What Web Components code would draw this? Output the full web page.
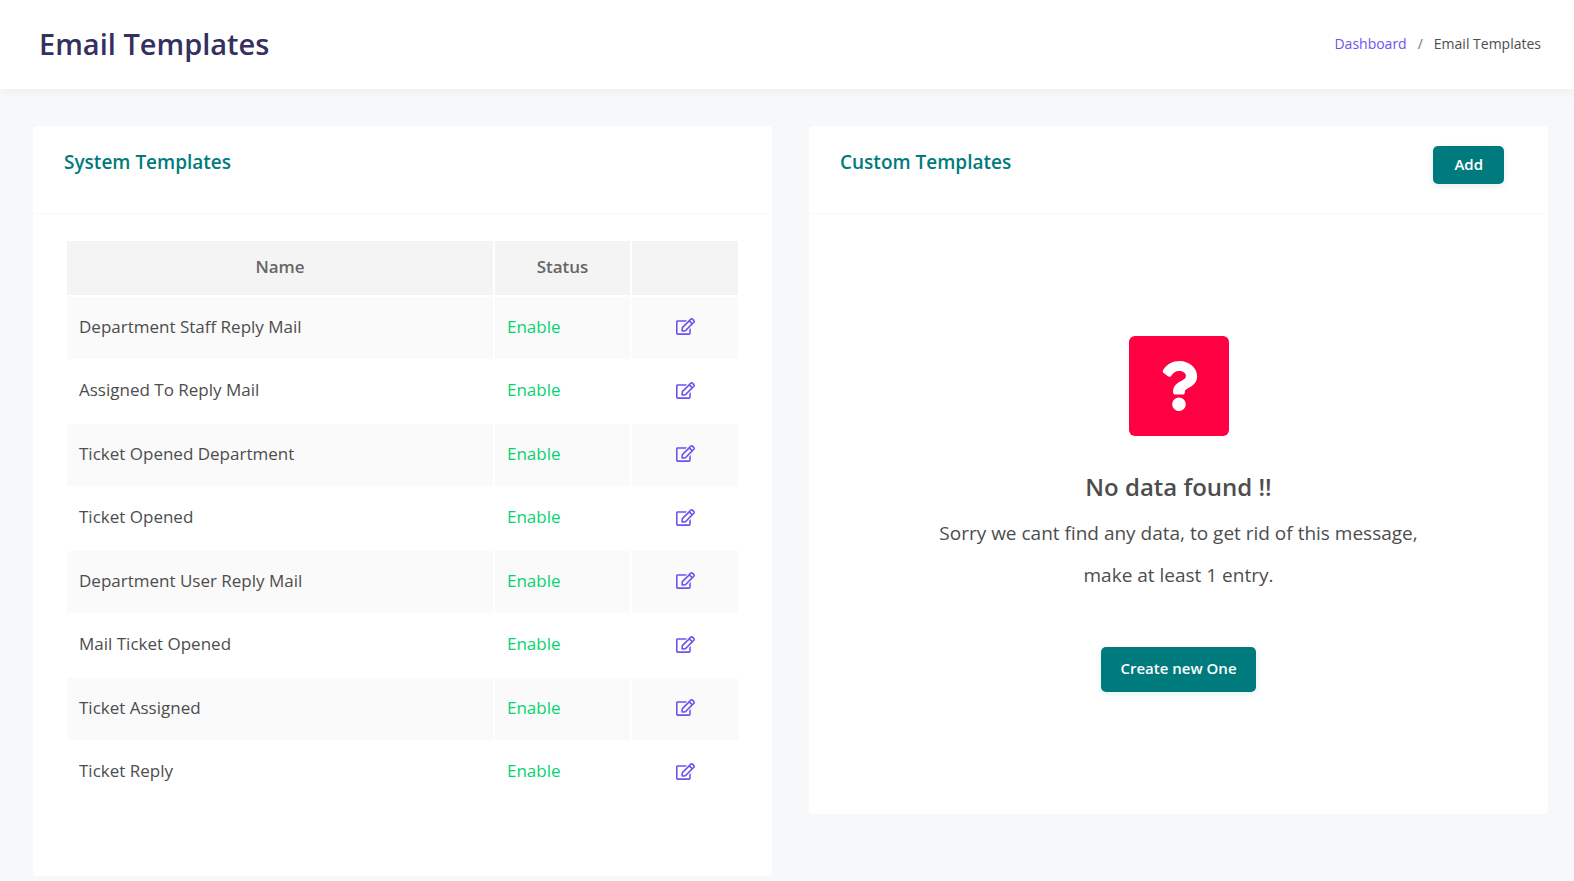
<!DOCTYPE html>
<html lang="en">
<head>
<meta charset="utf-8">
<title>Email Templates</title>
<style>
  body {
    margin: 0;
    min-height: 100vh;
    background: #f7f8fa;
    color: #4d4d4d;
    font-family: "Open Sans", sans-serif;
    font-size: 17px;
  }
  main {
    display: grid;
    grid-template-columns: 1fr 1fr;
    align-items: start;
    gap: 37px;
    padding: 37px 26px 4px 33px;
  }
</style>
</head>
<body>
<page-header heading="Email Templates">
  <bread-crumb current="Email Templates"></bread-crumb>
</page-header>
<main>
  <template-card heading="System Templates">
    <template-table></template-table>
  </template-card>
  <template-card heading="Custom Templates">
    <action-button slot="action">Add</action-button>
    <empty-state heading="No data found !!">
      Sorry we cant find any data, to get rid of this message, make at least 1 entry.
      <action-button slot="action" size="large">Create new One</action-button>
    </empty-state>
  </template-card>
</main>
<script>
  class BaseElement extends HTMLElement {
    connectedCallback() {
      if (this.shadowRoot) return;
      this.attachShadow({ mode: 'open' }).innerHTML = this.render();
    }
  }

  customElements.define('page-header', class extends BaseElement {
    render() {
      return `
        <style>
          :host { display: block; }
          header {
            display: flex;
            align-items: center;
            justify-content: space-between;
            box-sizing: border-box;
            min-height: 89px;
            padding: 0 33px 2px 39px;
            background: #fff;
            box-shadow: 0 4px 8px rgba(0, 0, 0, .03);
          }
          h1 { margin: 0; color: #34305f; font-size: 29px; font-weight: 600; line-height: 40px; }
        </style>
        <header><h1>${this.getAttribute('heading')}</h1><slot></slot></header>`;
    }
  });

  customElements.define('bread-crumb', class extends BaseElement {
    render() {
      return `
        <style>
          :host { display: block; font-size: 14px; line-height: 24px; }
          ol { display: flex; gap: 11px; margin: 0; padding: 0; list-style: none; }
          li { display: flex; gap: 11px; }
          li + li::before { content: "/"; color: #6c757d; }
          a { color: #6f52ed; text-decoration: none; }
        </style>
        <nav aria-label="Breadcrumb"><ol>
          <li><a href="#dashboard">Dashboard</a></li>
          <li aria-current="page">${this.getAttribute('current')}</li>
        </ol></nav>`;
    }
  });

  customElements.define('template-card', class extends BaseElement {
    render() {
      return `
        <style>
          :host { display: block; border-radius: 4px; background: #fff; }
          header {
            display: flex;
            align-items: flex-start;
            justify-content: space-between;
            box-sizing: border-box;
            min-height: 88px;
            padding: 20px 44px 20px 31px;
            border-bottom: 1px solid #f8f8f8;
          }
          h2 { margin: 0; color: #007b7d; font-size: 19px; font-weight: 600; line-height: 32px; }
        </style>
        <section>
          <header><h2>${this.getAttribute('heading')}</h2><slot name="action"></slot></header>
          <slot></slot>
        </section>`;
    }
  });

  customElements.define('action-button', class extends BaseElement {
    render() {
      return `
        <style>
          :host { display: inline-block; }
          button {
            display: block;
            padding: 6px 21px 8px;
            border: 0;
            border-radius: 5px;
            background: #007b7d;
            box-shadow: 0 2px 6px rgba(0, 123, 125, .12);
            color: #fff;
            font: 600 15px/24px "Open Sans", sans-serif;
            cursor: pointer;
          }
          :host([size="large"]) button { padding: 9px 19px 11px; line-height: 25px; }
        </style>
        <button type="button"><slot></slot></button>`;
    }
  });

  customElements.define('template-table', class extends BaseElement {
    render() {
      const names = [
        'Department Staff Reply Mail', 'Assigned To Reply Mail', 'Ticket Opened Department',
        'Ticket Opened', 'Department User Reply Mail', 'Mail Ticket Opened',
        'Ticket Assigned', 'Ticket Reply'
      ];
      const rows = names.map(name => `
        <tr>
          <td>${name}</td>
          <td class="on">Enable</td>
          <td class="edit"><a href="#edit" aria-label="Edit ${name}"><svg viewBox="0 0 576 512" width="19" height="17" aria-hidden="true"><path fill="currentColor" d="M402.3 344.9l32-32c5-5 13.7-1.5 13.7 5.7V464c0 26.500-21.500 48-48 48H48c-26.500 0-48-21.500-48-48V112c0-26.500 21.500-48 48-48h273.500c7.100 0 10.700 8.600 5.700 13.700l-32 32c-1.500 1.500-3.500 2.300-5.700 2.300H48v352h352V350.500c0-2.100.8-4.100 2.300-5.600zm156.600-201.800L296.300 405.700l-90.400 10c-26.200 2.900-48.500-19.200-45.600-45.600l10-90.400L432.900 17.100c22.900-22.900 59.900-22.900 82.700 0l43.200 43.200c22.900 22.900 22.900 60 .1 82.800zM460.100 174L402 115.900 216.200 301.800l-7.300 65.300 65.300-7.300L460.100 174zm64.800-79.700l-43.200-43.200c-4.100-4.100-10.800-4.100-14.800 0L436 82l58.100 58.100 30.900-30.900c4-4.200 4-10.800-.1-14.900z"/></svg></a></td>
        </tr>`).join('');
      return `
        <style>
          :host { display: block; padding: 25px 32px 71px; }
          table { width: 100%; height: 566px; table-layout: fixed; border-collapse: collapse; line-height: 26px; }
          .status { width: 137px; }
          .action { width: 108px; }
          th, td { box-sizing: border-box; padding: 0 12px 2px; border: 2px solid #fff; }
          th { height: 56px; background: #f4f4f4; color: #666; font-weight: 600; }
          td { text-align: left; }
          tbody tr:nth-child(odd) { background: #fafafa; }
          .on { color: #04d46f; }
          .edit { text-align: center; }
          a { color: #6f52ed; }
          svg { display: block; margin: 0 auto; }
        </style>
        <table>
          <colgroup><col><col class="status"><col class="action"></colgroup>
          <thead><tr><th scope="col">Name</th><th scope="col">Status</th><th></th></tr></thead>
          <tbody>${rows}</tbody>
        </table>`;
    }
  });

  customElements.define('empty-state', class extends BaseElement {
    render() {
      return `
        <style>
          :host { display: flex; flex-direction: column; align-items: center; padding: 122px 32px; text-align: center; }
          .icon { display: grid; place-items: center; width: 100px; height: 100px; border-radius: 6px; background: #ff0042; color: #fff; }
          h3 { margin: 31px 0 0; font-size: 24px; font-weight: 600; line-height: 40px; }
          p { max-width: 520px; margin: 5px 0 51px; font-size: 19px; line-height: 42px; }
        </style>
        <div class="icon"><svg viewBox="0 0 384 512" width="38" height="50" aria-hidden="true"><path fill="currentColor" d="M202.021 0C122.202 0 70.503 32.703 29.914 91.026c-7.363 10.580-5.093 25.086 5.178 32.874l43.138 32.709c10.373 7.865 25.132 6.026 33.253-4.148 25.049-31.381 43.630-49.449 82.757-49.449 30.764 0 68.816 19.799 68.816 49.631 0 22.552-18.617 34.134-48.993 51.164-35.423 19.860-82.299 44.576-82.299 106.405V320c0 13.255 10.745 24 24 24h72.471c13.255 0 24-10.745 24-24v-5.773c0-42.860 125.268-44.645 125.268-160.627C377.504 66.256 286.902 0 202.021 0zM192 373.459c-38.196 0-69.271 31.075-69.271 69.271 0 38.195 31.075 69.270 69.271 69.270s69.271-31.075 69.271-69.271-31.075-69.270-69.271-69.270z"/></svg></div>
        <h3>${this.getAttribute('heading')}</h3>
        <p><slot></slot></p>
        <slot name="action"></slot>`;
    }
  });
</script>
</body>
</html>
